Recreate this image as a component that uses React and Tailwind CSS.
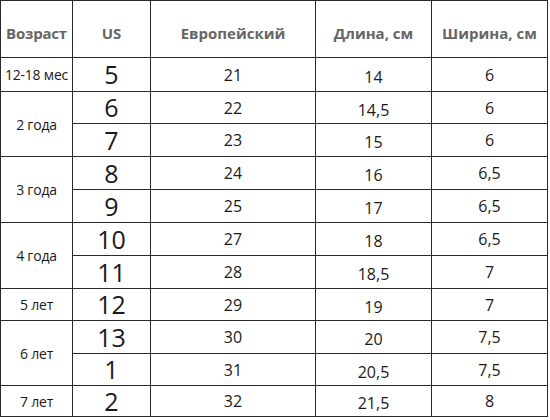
const rows = [
  { age: '12-18 мес', span: 1, us: '5', eu: '21', len: '14', wid: '6', h: 'h-[34px]' },
  { age: '2 года', span: 2, us: '6', eu: '22', len: '14,5', wid: '6', h: 'h-[32px]' },
  { us: '7', eu: '23', len: '15', wid: '6', h: 'h-[33px]' },
  { age: '3 года', span: 2, us: '8', eu: '24', len: '16', wid: '6,5', h: 'h-[33px]' },
  { us: '9', eu: '25', len: '17', wid: '6,5', h: 'h-[33px]' },
  { age: '4 года', span: 2, us: '10', eu: '27', len: '18', wid: '6,5', h: 'h-[33px]' },
  { us: '11', eu: '28', len: '18,5', wid: '7', h: 'h-[33px]' },
  { age: '5 лет', span: 1, us: '12', eu: '29', len: '19', wid: '7', h: 'h-[32px]' },
  { age: '6 лет', span: 2, us: '13', eu: '30', len: '20', wid: '7,5', h: 'h-[33px]' },
  { us: '1', eu: '31', len: '20,5', wid: '7,5', h: 'h-[32px]' },
  { age: '7 лет', span: 1, us: '2', eu: '32', len: '21,5', wid: '8', h: 'h-[31px]' },
];

const cell = 'border border-[#2a2a2a] text-center align-middle p-0';

export default function App() {
  return (
    <div className="w-[550px] h-[420px] bg-white font-['Open_Sans',sans-serif]">
      <table className="border-collapse table-fixed w-[547px]">
        <colgroup>
          <col className="w-[72px]" />
          <col className="w-[78px]" />
          <col className="w-[165px]" />
          <col className="w-[116px]" />
          <col className="w-[116px]" />
        </colgroup>
        <thead>
          <tr className="h-[57px] text-[#666] font-bold text-[15px]">
            <th className={`${cell} pt-2 tracking-[-0.2px] whitespace-nowrap`}>Возраст</th>
            <th className={`${cell} pt-2`}>US</th>
            <th className={`${cell} pt-2`}>Европейский</th>
            <th className={`${cell} pt-2`}>Длина, см</th>
            <th className={`${cell} pt-2`}>Ширина, см</th>
          </tr>
        </thead>
        <tbody className="text-[#1a1a1a]">
          {rows.map((r, i) => (
            <tr key={i} className={r.h}>
              {r.age && (
                <td rowSpan={r.span} className={`${cell} text-[14px] tracking-[-0.2px] whitespace-nowrap`}>{r.age}</td>
              )}
              <td className={`${cell} text-[25px] leading-none`}>{r.us}</td>
              <td className={`${cell} text-[16px]`}>{r.eu}</td>
              <td className={`${cell} text-[16px] pt-1`}>{r.len}</td>
              <td className={`${cell} text-[16px]`}>{r.wid}</td>
            </tr>
          ))}
        </tbody>
      </table>
    </div>
  );
}
